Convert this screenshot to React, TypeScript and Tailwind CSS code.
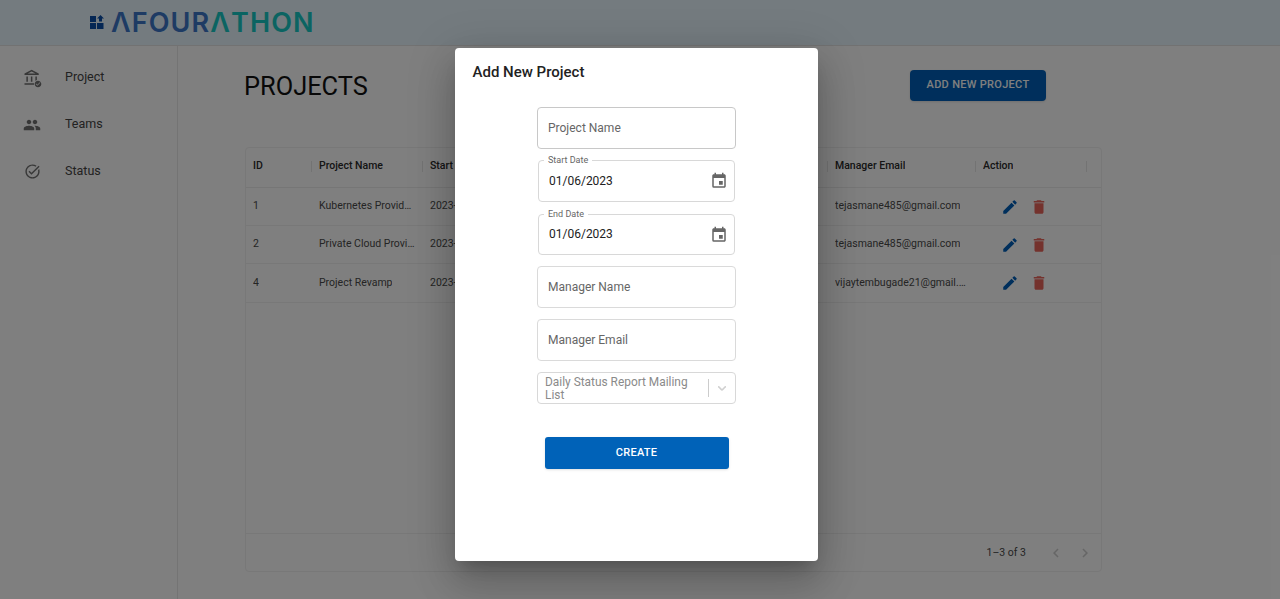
import { MdDelete, MdEdit, MdEvent, MdChevronLeft, MdChevronRight, MdPeople, MdTaskAlt, MdOutlineAccountBalance, MdCheckCircle } from "react-icons/md";

const rows = [
  { id: "1", name: "Kubernetes Provider Service", start: "2023-01-06", end: "2023-01-06", manager: "Tejas Mane", email: "tejasmane485@gmail.com", h: "h-[38px]" },
  { id: "2", name: "Private Cloud Provider", start: "2023-01-06", end: "2023-01-06", manager: "Tejas Mane", email: "tejasmane485@gmail.com", h: "h-[38px]" },
  { id: "4", name: "Project Revamp", start: "2023-01-06", end: "2023-01-06", manager: "Vijay Tembugade", email: "vijaytembugade21@gmail.com", h: "h-[39px]" },
];

const gridCols = "grid grid-cols-[66px_111px_135px_135px_135px_148px_111px_1fr]";

const Logo = () => (
  <div className="flex items-center gap-[7px] ml-[90px]">
    <svg width="14" height="15" viewBox="0 0 14 15" fill="#0a4fa8">
      <rect x="0" y="1" width="6" height="6" />
      <path d="M10.5 0 14 3.5H12V6.5H9V3.5H7Z" />
      <rect x="0" y="8" width="6" height="6" />
      <rect x="7" y="8" width="6.5" height="6" />
    </svg>
    <div className="font-['Inter',sans-serif] text-[27px] leading-none font-semibold tracking-[1.1px] whitespace-nowrap">
      <span className="text-[#3c76c8]">ΛFOUR</span>
      <span className="text-[#17c9c4]">ΛTHON</span>
    </div>
  </div>
);

const NavItem = ({ icon, label }: { icon: React.ReactNode; label: string }) => (
  <div className="flex items-center h-[47px]">
    <div className="w-[65px] pr-[1px] flex justify-center text-[#707070]">{icon}</div>
    <span className="text-[12.5px] text-[#444444]">{label}</span>
  </div>
);

const HeaderCell = ({ label }: { label: string }) => (
  <div className="flex items-center justify-between pl-[7px] pb-[3px] overflow-hidden">
    <span className="text-[10.5px] font-medium text-[#2a2a2a] truncate">{label}</span>
    <span className="w-px h-[11px] bg-[#e6e6e6]" />
  </div>
);

const Cell = ({ children }: { children: React.ReactNode }) => (
  <div className="flex items-center pl-[7px] pr-[8px] pb-[1px] min-w-0">
    <span className="text-[10.5px] text-[#4a4a4a] truncate">{children}</span>
  </div>
);

const TextField = ({ placeholder, border }: { placeholder: string; border: string }) => (
  <div className={`w-[199px] h-[42px] border ${border} rounded flex items-center px-[10px] text-[12px] text-[#666666]`}>
    {placeholder}
  </div>
);

const DateField = ({ label, h }: { label: string; h: string }) => (
  <div className={`relative w-[197px] ${h} border border-[#d8d8d8] rounded flex items-center justify-between pl-[10px] pr-[6px] text-[12px] text-[#222222]`}>
    <span className="absolute left-[5px] top-[-6px] bg-white px-[4px] text-[9px] leading-[10px] text-[#666666]">{label}</span>
    <span className="pb-[1px]">01/06/2023</span>
    <MdEvent size={18} className="text-[#666666]" />
  </div>
);

export default function App() {
  return (
    <div className="relative w-[1280px] h-[599px] overflow-hidden bg-white font-['Roboto',sans-serif]">
      <header className="h-[46px] bg-[#e8f6ff] flex items-center border-b border-[#e4e4e4]">
        <Logo />
      </header>
      <div className="flex h-[553px]">
        <aside className="w-[178px] shrink-0 border-r border-[#e8e8e8] pt-[8px]">
          <NavItem
            label="Project"
            icon={
              <span className="relative flex">
                <MdOutlineAccountBalance size={18} />
                <MdCheckCircle size={8} className="absolute right-[-1px] bottom-[-1px] text-[#707070] bg-white rounded-full" />
              </span>
            }
          />
          <NavItem label="Teams" icon={<MdPeople size={18} />} />
          <NavItem label="Status" icon={<MdTaskAlt size={17} />} />
        </aside>
        <main className="flex-1 pl-[67px] pr-[178px]">
          <div className="flex items-center justify-between h-[78px] pr-[56px]">
            <h1 className="text-[25.4px] text-[#111111] pt-[3px] -ml-[1px]">PROJECTS</h1>
            <button className="w-[136px] h-[31px] mt-[1px] rounded bg-[#005fb8] text-white text-[11px] font-medium tracking-[0.3px] shadow">ADD NEW PROJECT</button>
          </div>
          <div className="mt-[23px] w-[857px] h-[425px] border border-[#f0f0f0] rounded flex flex-col">
            <div className={`${gridCols} h-[40px] border-b border-[#ececec]`}>
              {["ID", "Project Name", "Start Date", "End Date", "Manager Name", "Manager Email", "Action"].map((h) => (
                <HeaderCell key={h} label={h} />
              ))}
            </div>
            {rows.map((r) => (
              <div key={r.id} className={`${gridCols} ${r.h} border-b border-[#f0f0f0]`}>
                <Cell>{r.id}</Cell>
                <Cell>{r.name}</Cell>
                <Cell>{r.start}</Cell>
                <Cell>{r.end}</Cell>
                <Cell>{r.manager}</Cell>
                <Cell>{r.email}</Cell>
                <div className="flex items-center gap-[11px] pl-[25px]">
                  <MdEdit size={18} className="text-[#005fb8]" />
                  <MdDelete size={18} className="text-[#e8645a]" />
                </div>
              </div>
            ))}
            <div className="flex-1 border-b border-[#f0f0f0]" />
            <div className="h-[37px] flex items-center justify-end pr-[7px]">
              <span className="text-[10.5px] text-[#4a4a4a] mr-[21px]">1–3 of 3</span>
              <MdChevronLeft size={18} className="text-[#cccccc] mr-[11px]" />
              <MdChevronRight size={18} className="text-[#cccccc]" />
            </div>
          </div>
        </main>
      </div>

      <div className="absolute inset-0 bg-black/50" />

      <div className="absolute left-[455px] top-[48px] w-[363px] h-[513px] bg-white rounded shadow-[0_11px_15px_-7px_rgba(0,0,0,0.2),0_24px_38px_3px_rgba(0,0,0,0.14),0_9px_46px_8px_rgba(0,0,0,0.12)]">
        <h2 className="pl-[17.5px] pt-[14px] text-[15px] leading-[20px] font-medium text-[#222222]">Add New Project</h2>
        <div className="mt-[25px] flex flex-col items-center">
          <TextField placeholder="Project Name" border="border-[#c8c8c8]" />
          <div className="mt-[11px]"><DateField label="Start Date" h="h-[42px]" /></div>
          <div className="mt-[12px]"><DateField label="End Date" h="h-[41px]" /></div>
          <div className="mt-[11px]"><TextField placeholder="Manager Name" border="border-[#dadada]" /></div>
          <div className="mt-[11px]"><TextField placeholder="Manager Email" border="border-[#dadada]" /></div>
          <div className="mt-[11px] w-[199px] h-[32px] border border-[#d8d8d8] rounded flex items-center pl-[7px] text-[11.9px] leading-[13px] text-[#8a8a8a]">
            <div className="flex-1 pt-[1px]">Daily Status Report Mailing List</div>
            <span className="w-px h-[18px] bg-[#cccccc]" />
            <svg width="14" height="14" viewBox="0 0 20 20" fill="#d0d0d0" className="ml-[6px] mr-[6px]">
              <path d="M4.516 7.548c0.436-0.446 1.043-0.481 1.576 0l3.908 3.747 3.908-3.747c0.533-0.481 1.141-0.446 1.574 0 0.436 0.445 0.408 1.197 0 1.615-0.406 0.418-4.695 4.502-4.695 4.502-0.217 0.223-0.502 0.335-0.787 0.335s-0.57-0.112-0.789-0.335c0 0-4.287-4.084-4.695-4.502s-0.436-1.17 0-1.615z" />
            </svg>
          </div>
          <button className="mt-[33px] w-[184px] h-[32px] rounded-[3px] bg-[#0062b8] text-white text-[11px] font-medium tracking-[0.3px] shadow-sm">CREATE</button>
        </div>
      </div>
    </div>
  );
}
